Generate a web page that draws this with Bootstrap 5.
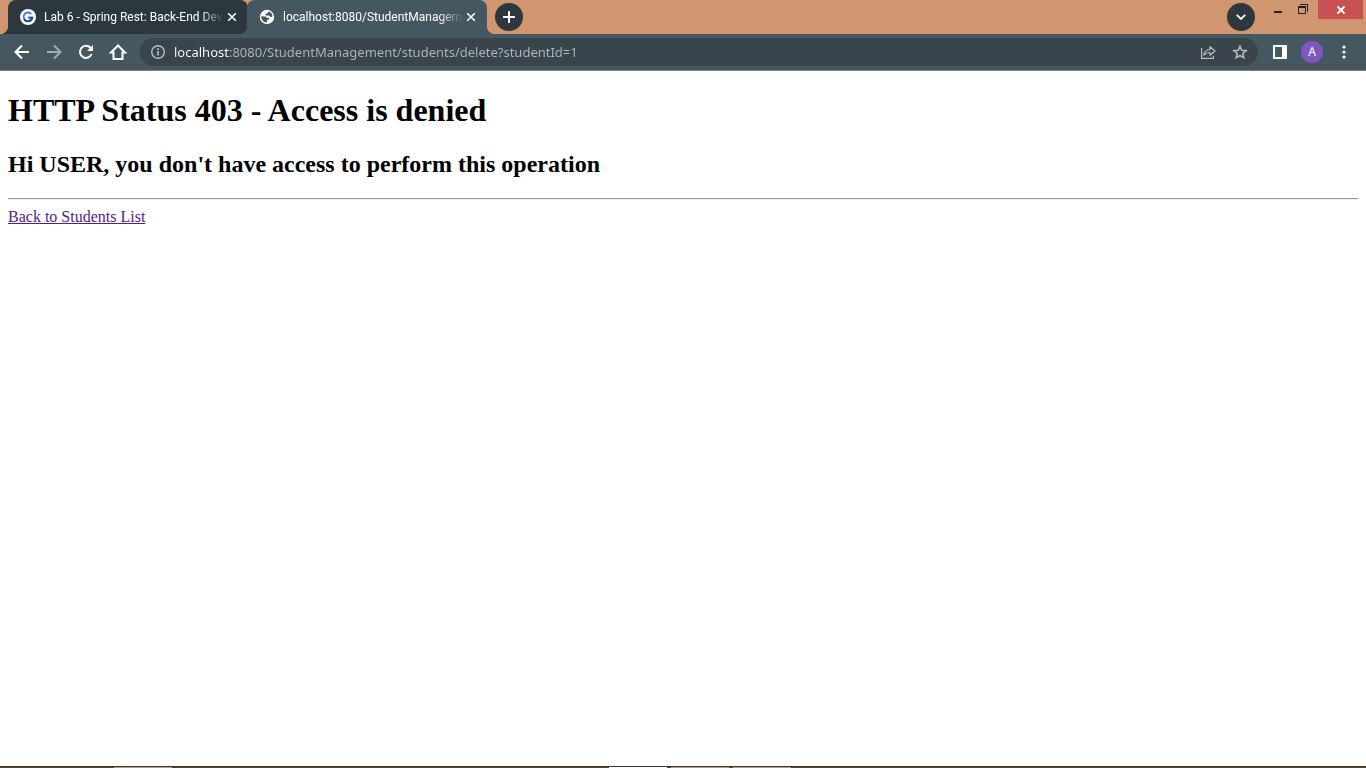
<!DOCTYPE html>
<html lang="en">
<head>
<meta charset="utf-8">
<meta name="viewport" content="width=device-width, initial-scale=1">
<title>localhost:8080/StudentManagement/students/delete?studentId=1</title>
<link href="https://cdn.jsdelivr.net/npm/bootstrap@5.3.0/dist/css/bootstrap.min.css" rel="stylesheet">
<style>
  :root { --frame: #d09670; --tab: #2c383e; --bar: #455760; --pill: #39454b; }
  body { font-family: "Noto Sans", "Open Sans", sans-serif; background: #fff; color: #000; }
  svg { display: block; flex: none; }
  button { border: 0; background: transparent; padding: 0; color: inherit; }

  .tab-strip { background: var(--frame); height: 34px; padding: 0 3px 0 8px; }
  .browser-tab { width: 240px; height: 34px; padding: 0 8px 0 12px; color: #fff; background: var(--tab); border-radius: 8px 8px 0 0; --flare: var(--tab); }
  .browser-tab + .browser-tab { margin-left: -1px; }
  .browser-tab.current { background: var(--bar); --flare: var(--bar); }
  .browser-tab::before, .browser-tab::after { content: ""; position: absolute; bottom: 0; width: 8px; height: 8px; }
  .browser-tab::before { left: -8px; background: radial-gradient(circle at 0 0, transparent 8px, var(--flare) 8px); }
  .browser-tab::after { right: -8px; background: radial-gradient(circle at 100% 0, transparent 8px, var(--flare) 8px); }
  .tab-title { font-family: Roboto, sans-serif; font-size: 12px; line-height: 18px; white-space: nowrap; text-align: left; -webkit-mask-image: linear-gradient(to left, transparent, #000 24px); mask-image: linear-gradient(to left, transparent, #000 24px); }
  .tab-pick { min-width: 0; gap: 8px; }
  .tab-close { width: 16px; height: 16px; }
  .round-btn { width: 28px; height: 28px; margin-top: 3px; border-radius: 50%; background: var(--tab); color: #fff; }
  .tab-search { margin-right: 10px; }
  .win-btn { height: 19px; color: #222; }
  .win-btn.min { width: 26px; }
  .win-btn.restore { width: 27px; padding-right: 3px; }
  .win-btn.close-win { width: 45px; background: #c75050; color: #fff; }

  .tool-bar { background: var(--bar); height: 37px; border-bottom: 1px solid #748189; padding: 0 12px; color: #fff; }
  .nav-btn { width: 20px; height: 20px; }
  .nav-set { gap: 12px; margin-right: 12px; }
  .side-set { gap: 11px; margin-left: 12px; }
  .address { background: var(--pill); height: 28px; border-radius: 14px; padding: 0 8px; color: #b8bec1; gap: 6px; }
  .page-set { gap: 12px; }
  .address input { border: 0; outline: 0; padding: 0; min-width: 0; font-size: 13px; line-height: 20px; color: #b1b6b9; -webkit-text-fill-color: transparent; background: linear-gradient(to right, #fff 55px, #b1b6b9 55px); -webkit-background-clip: text; background-clip: text; }
  .avatar { width: 22px; height: 22px; border-radius: 50%; background: #7e57c2; font-size: 12px; line-height: 22px; color: #fff; }

  .denied { font-family: "Liberation Serif", serif; line-height: 18px; padding: 0 8px; }
  .denied h1 { font-size: 32px; line-height: 37px; font-weight: 700; margin: 21px 0 22px; }
  .denied h2 { font-size: 24px; line-height: 27px; font-weight: 700; margin: 0 0 20px; }
  .denied hr { border: 0; border-top: 1px solid #9a9a9a; border-bottom: 1px solid #eee; opacity: 1; margin: 0 0 8px; }
  .denied a { font-size: 16px; color: #551a8b; }

  .task-bar { height: 2px; background: #57402e; border-top: 1px solid #4a3425; }
  .task-bar span { height: 1px; background: #b29c96; }
  .task-bar .w-item { width: 58px; }
  .task-bar .first-item { margin-left: 114px; }
</style>
</head>
<body class="d-flex flex-column min-vh-100">

<header>
  <div class="tab-strip d-flex align-items-start">
    <ul class="list-unstyled d-flex mb-0">
      <li class="browser-tab position-relative d-flex align-items-center">
        <button type="button" class="tab-pick d-flex align-items-center flex-grow-1">
          <svg width="16" height="16" viewBox="0 0 16 16" aria-hidden="true"><circle cx="8" cy="8" r="8" fill="#fff"/><path d="M11.200 5A4.300 4.300 0 1 0 12.200 8.600H8.400" fill="none" stroke="#3c7fe0" stroke-width="1.900"/><path d="M4.200 10.200a4.300 4.300 0 0 0 8-1.600H8.400" fill="none" stroke="#24479f" stroke-width="1.900"/></svg>
          <span class="tab-title flex-grow-1">Lab 6 - Spring Rest: Back-End Dev</span>
        </button>
        <button type="button" class="tab-close d-flex flex-shrink-0 align-items-center justify-content-center" aria-label="Close tab"><svg width="10" height="10" viewBox="0 0 10 10" stroke="currentColor" stroke-width="1.600"><path d="M1.200 1.200l7.600 7.600M8.800 1.200L1.200 8.800"/></svg></button>
      </li>
      <li class="browser-tab current position-relative d-flex align-items-center">
        <button type="button" class="tab-pick d-flex align-items-center flex-grow-1">
          <svg width="16" height="16" viewBox="0 0 16 16" aria-hidden="true"><circle cx="8" cy="8" r="7.200" fill="#fff"/><path d="M2.200 7.300l4 .1c1 0 1.300.6 1.300 1.400h1.900c1 0 1.200 1 .7 1.600l-2 .3v2.800c-3.300.1-5.900-2.600-5.900-6.200zM9.500 2.400c-.1 1.300-.8 1.400-1.800 1.500-.1 1-.6 1.300-1.200 1.500 0 .9.400 1.100 1.300 1.100l2.100.1c.8.1.9 1 1.500 1.300.9.300 1.700-.2 2.200-.6-.2-2.400-1.800-4.200-4.100-4.900z" fill="#455760"/></svg>
          <span class="tab-title flex-grow-1">localhost:8080/StudentManagem</span>
        </button>
        <button type="button" class="tab-close d-flex flex-shrink-0 align-items-center justify-content-center" aria-label="Close tab"><svg width="10" height="10" viewBox="0 0 10 10" stroke="currentColor" stroke-width="1.600"><path d="M1.200 1.200l7.600 7.600M8.800 1.200L1.200 8.800"/></svg></button>
      </li>
    </ul>
    <button type="button" class="round-btn d-flex align-items-center justify-content-center ms-2" aria-label="New tab"><svg width="14" height="14" viewBox="0 0 14 14" stroke="currentColor" stroke-width="2"><path d="M7 1v12M1 7h12"/></svg></button>
    <div class="d-flex ms-auto">
      <button type="button" class="round-btn tab-search d-flex align-items-center justify-content-center" aria-label="Search tabs"><svg width="12" height="12" viewBox="0 0 12 12" fill="none" stroke="currentColor" stroke-width="1.800"><path d="M1.800 3.800L6 8l4.200-4.200"/></svg></button>
      <button type="button" class="win-btn min d-flex justify-content-center" aria-label="Minimize"><svg width="10" height="19" viewBox="0 0 10 19"><path d="M1 11h8v2H1z" fill="currentColor"/></svg></button>
      <button type="button" class="win-btn restore d-flex justify-content-center" aria-label="Restore"><svg width="12" height="19" viewBox="0 0 12 19" fill="none" stroke="currentColor" shape-rendering="crispEdges"><path d="M3 4.500h7.500V12"/><path d="M1.500 7v6.500h7V7"/><path d="M1 7h8" stroke-width="2"/></svg></button>
      <button type="button" class="win-btn close-win d-flex align-items-center justify-content-center" aria-label="Close"><svg width="10" height="10" viewBox="0 0 10 10" stroke="currentColor" stroke-width="1.800"><path d="M1.500 1.500l7 7M8.500 1.500l-7 7"/></svg></button>
    </div>
  </div>

  <div class="tool-bar d-flex align-items-center">
    <nav class="nav-set d-flex" aria-label="Browser">
      <button type="button" class="nav-btn" aria-label="Back"><svg width="20" height="20" viewBox="0 0 20 20" fill="none" stroke="currentColor" stroke-width="2"><path d="M17 10H4.500M10 3.500L3.500 10l6.500 6.500"/></svg></button>
      <button type="button" class="nav-btn opacity-50" aria-label="Forward"><svg width="20" height="20" viewBox="0 0 20 20" fill="none" stroke="currentColor" stroke-width="2"><path d="M3 10h12.500M10 3.500l6.500 6.500-6.500 6.500"/></svg></button>
      <button type="button" class="nav-btn" aria-label="Reload"><svg width="20" height="20" viewBox="0 0 20 20" fill="none" stroke="currentColor" stroke-width="2"><path d="M15.600 12A6 6 0 1 1 14.400 5.800L16 7.400"/><path d="M17 3v6h-6z" fill="currentColor" stroke="none"/></svg></button>
      <button type="button" class="nav-btn" aria-label="Home"><svg width="20" height="20" viewBox="0 0 20 20" fill="none" stroke="currentColor" stroke-width="2"><path d="M3 10.500h2.500V17h9v-6.500H17L10 3.500z"/></svg></button>
    </nav>
    <div class="address d-flex align-items-center flex-grow-1">
      <svg width="20" height="20" viewBox="0 0 20 20" aria-hidden="true"><circle cx="10" cy="10" r="6.300" fill="none" stroke="currentColor" stroke-width="1.400"/><path d="M9.200 9h1.600v4.500H9.200zM9.200 6.300h1.600v1.600H9.200z" fill="currentColor"/></svg>
      <input type="text" class="flex-grow-1" aria-label="Address" spellcheck="false" value="localhost:8080/StudentManagement/students/delete?studentId=1">
      <div class="page-set d-flex">
        <button type="button" class="nav-btn" aria-label="Share"><svg width="20" height="20" viewBox="0 0 20 20" fill="none" stroke="currentColor" stroke-width="1.200"><path d="M3.600 6v10.400h11.800v-2.600"/><path d="M5.800 13.200c.5-3.800 2.600-5.600 6.200-5.700V4.800l5 4.200-5 4.200v-2.700c-2.700-.1-4.600.7-6.200 2.700z" stroke-linejoin="round"/></svg></button>
        <button type="button" class="nav-btn" aria-label="Bookmark"><svg width="20" height="20" viewBox="0 0 20 20" fill="none" stroke="currentColor" stroke-width="1.500"><path d="M10 4.200l1.700 4 4.400.4-3.300 2.900 1 4.200-3.800-2.200-3.800 2.200 1-4.200-3.300-2.900 4.400-.4z"/></svg></button>
      </div>
    </div>
    <div class="side-set d-flex align-items-center">
      <button type="button" class="nav-btn" aria-label="Side panel"><svg width="20" height="20" viewBox="0 0 20 20"><path fill-rule="evenodd" d="M3 3h14v14H3zM5 5v10h7V5z" fill="currentColor"/></svg></button>
      <button type="button" class="avatar text-center" aria-label="Profile A">A</button>
      <button type="button" class="nav-btn" aria-label="Menu"><svg width="20" height="20" viewBox="0 0 20 20" fill="currentColor"><circle cx="10" cy="5" r="1.600"/><circle cx="10" cy="10" r="1.600"/><circle cx="10" cy="15" r="1.600"/></svg></button>
    </div>
  </div>
</header>

<main class="denied flex-grow-1">
  <h1>HTTP Status 403 - Access is denied</h1>
  <h2>Hi USER, you don't have access to perform this operation</h2>
  <hr>
  <a href="#">Back to Students List</a>
</main>

<footer class="task-bar d-flex" aria-hidden="true">
  <div class="col-5 d-flex"><span class="w-item first-item"></span></div>
  <div class="d-flex gap-1 ms-4 ps-3"><span class="w-item bg-white"></span><span class="w-item"></span><span class="w-item"></span></div>
</footer>

<script src="https://cdn.jsdelivr.net/npm/bootstrap@5.3.0/dist/js/bootstrap.bundle.min.js"></script>
</body>
</html>
